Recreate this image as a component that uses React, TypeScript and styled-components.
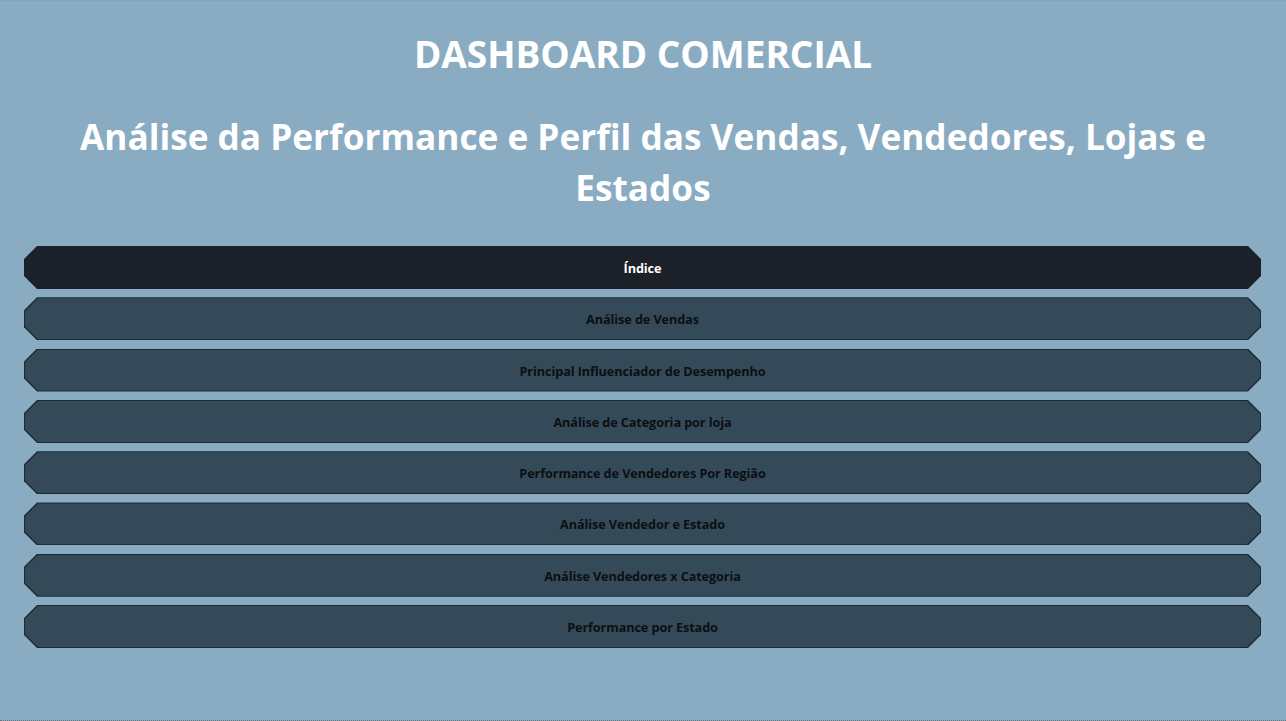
import React from "react";
import styled, { createGlobalStyle } from "styled-components";

const Global = createGlobalStyle`
  html, body { margin: 0; padding: 0; }
  body { background: #8aacc3; font-family: "Open Sans", "Noto Sans", sans-serif; }
`;

const Page = styled.div`
  height: 721px;
  box-sizing: border-box;
  background: #8aacc3;
  border-top: 1px solid #84a6bd;
  border-bottom: 1px dotted #6d7378;
  display: flex;
  flex-direction: column;
  align-items: stretch;
`;

const Title = styled.h1`
  margin: 29px 0 0;
  text-align: center;
  color: #ffffff;
  font-size: 37px;
  line-height: 48px;
  font-weight: 700;
`;

const Subtitle = styled.h2`
  margin: 33px 0 0;
  text-align: center;
  color: #ffffff;
  font-size: 35.2px;
  line-height: 51px;
  font-weight: 700;
`;

const Nav = styled.nav`
  margin: 33px 25px 0 24px;
  display: flex;
  flex-direction: column;
  gap: 8.3px;
`;

const shape = `polygon(13px 0, calc(100% - 13px) 0, 100% 13px, 100% calc(100% - 13px), calc(100% - 13px) 100%, 13px 100%, 0 calc(100% - 13px), 0 13px)`;

const ButtonFrame = styled.button<{ $active?: boolean }>`
  all: unset;
  box-sizing: border-box;
  height: 43px;
  padding: 1px;
  cursor: pointer;
  background: ${(p) => (p.$active ? "#1b2029" : "#1e2a34")};
  clip-path: ${shape};
  display: flex;
`;

const ButtonFace = styled.span<{ $active?: boolean }>`
  flex: 1;
  display: flex;
  align-items: center;
  justify-content: center;
  background: ${(p) => (p.$active ? "#1b2029" : "#354a59")};
  clip-path: ${shape};
  color: ${(p) => (p.$active ? "#ffffff" : "#0b0f12")};
  font-family: "Open Sans", "Noto Sans", sans-serif;
  font-size: 12.7px;
  font-weight: 700;
  letter-spacing: -0.1px;
  padding-top: 1px;
`;

const items = [
  "Índice",
  "Análise de Vendas",
  "Principal Influenciador de Desempenho",
  "Análise de Categoria por loja",
  "Performance de Vendedores Por Região",
  "Análise Vendedor e Estado",
  "Análise Vendedores x Categoria",
  "Performance por Estado",
];

export default function App() {
  return (
    <Page>
      <Global />
      <Title>DASHBOARD COMERCIAL</Title>
      <Subtitle>
        Análise da Performance e Perfil das Vendas, Vendedores, Lojas e
        <br />
        Estados
      </Subtitle>
      <Nav>
        {items.map((label, i) => (
          <ButtonFrame key={label} $active={i === 0}>
            <ButtonFace $active={i === 0}>{label}</ButtonFace>
          </ButtonFrame>
        ))}
      </Nav>
    </Page>
  );
}
